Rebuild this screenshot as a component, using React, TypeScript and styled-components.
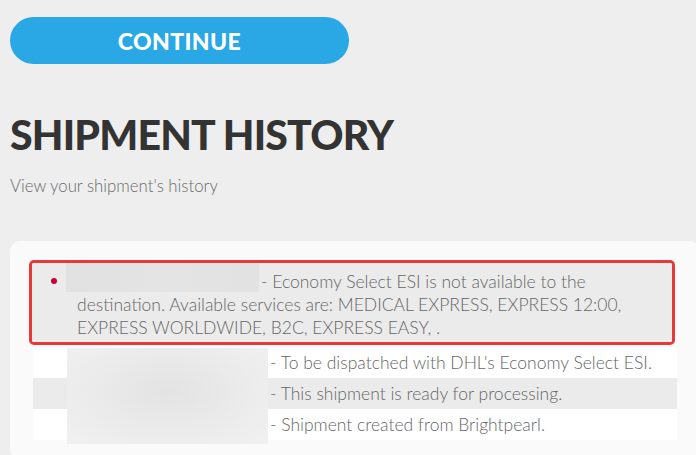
import React from "react";
import styled, { createGlobalStyle } from "styled-components";

const GlobalStyle = createGlobalStyle`
  html, body {
    margin: 0;
    padding: 0;
    background: #eeeeee;
    font-family: Lato, "Open Sans", sans-serif;
    overflow: hidden;
  }
`;

const Page = styled.div`
  padding: 17px 0 0 10px;
  width: 686px;
  height: 438px;
  overflow: hidden;
`;

const ContinueButton = styled.button`
  display: flex;
  align-items: center;
  justify-content: center;
  width: 339px;
  height: 47px;
  border: none;
  border-radius: 24px;
  background: #2aa8e6;
  color: #ffffff;
  font-family: Lato, sans-serif;
  font-weight: 900;
  font-size: 23px;
  letter-spacing: 0.4px;
  padding: 0;
  cursor: pointer;
`;

const Title = styled.h1`
  margin: 50px 0 0;
  font-family: Lato, sans-serif;
  font-weight: 900;
  font-size: 41px;
  line-height: 42px;
  color: #333333;
  letter-spacing: -0.8px;
`;

const Subtitle = styled.p`
  margin: 20px 0 0;
  font-size: 16.8px;
  line-height: 20px;
  font-weight: 300;
  color: #6a6a6a;
`;

const Card = styled.div`
  margin-top: 45px;
  width: 644px;
  padding: 19px 23px;
  background: #fafafa;
  border-radius: 10px;
`;

const Highlight = styled.div`
  margin: 0 2px 2px -4px;
  border: 3px solid #e8393a;
  border-radius: 5px;
  overflow: hidden;
`;

const Row = styled.div<{ $tone: "gray" | "white"; $pad?: string }>`
  display: grid;
  grid-template-columns: 45px 1fr;
  padding: ${(p) => p.$pad ?? "4px 12px 4px 0"};
  background: ${(p) => (p.$tone === "gray" ? "#ebebeb" : "#ffffff")};
  font-size: 17.5px;
  line-height: 23px;
  font-weight: 300;
  color: #666666;
`;

const BulletCell = styled.span`
  display: flex;
  justify-content: flex-end;
  padding: 8px 20px 0 0;
`;

const Dot = styled.span`
  width: 6px;
  height: 6px;
  border-radius: 50%;
  background: #c8003a;
`;

const Text = styled.div``;

const InlineRedaction = styled.span`
  display: inline-block;
  vertical-align: top;
  width: 193px;
  height: 29px;
  margin: -7px 2px 1px -11px;
  background: linear-gradient(90deg, #e1e1e1, #e4e4e4 50%, #e2e2e2);
`;

const Spacer = styled.span`
  display: inline-block;
  width: 192px;
`;

const RowGroup = styled.div`
  position: relative;
`;

const GroupRedaction = styled.div`
  position: absolute;
  left: 34px;
  top: 1px;
  width: 201px;
  height: 96px;
  background: radial-gradient(ellipse at 50% 45%, #e3e3e3 0%, #ebebeb 55%, #f1f1f1 100%);
`;

const history = [
  { tone: "white" as const, text: "- To be dispatched with DHL's Economy Select ESI." },
  { tone: "gray" as const, text: "- This shipment is ready for processing." },
  { tone: "white" as const, text: "- Shipment created from Brightpearl." },
];

export default function App() {
  return (
    <>
      <GlobalStyle />
      <Page>
        <ContinueButton>CONTINUE</ContinueButton>
        <Title>SHIPMENT HISTORY</Title>
        <Subtitle>View your shipment's history</Subtitle>
        <Card>
          <Highlight>
            <Row $tone="gray" $pad="7px 12px 3px 0">
              <BulletCell>
                <Dot />
              </BulletCell>
              <Text>
                <InlineRedaction />
                - Economy Select ESI is not available to the destination. Available services are: MEDICAL
                EXPRESS, EXPRESS 12:00, EXPRESS WORLDWIDE, B2C, EXPRESS EASY, .
              </Text>
            </Row>
          </Highlight>
          <RowGroup>
            {history.map((h) => (
              <Row key={h.text} $tone={h.tone}>
                <span />
                <Text>
                  <Spacer />
                  {h.text}
                </Text>
              </Row>
            ))}
            <GroupRedaction />
          </RowGroup>
        </Card>
      </Page>
    </>
  );
}
